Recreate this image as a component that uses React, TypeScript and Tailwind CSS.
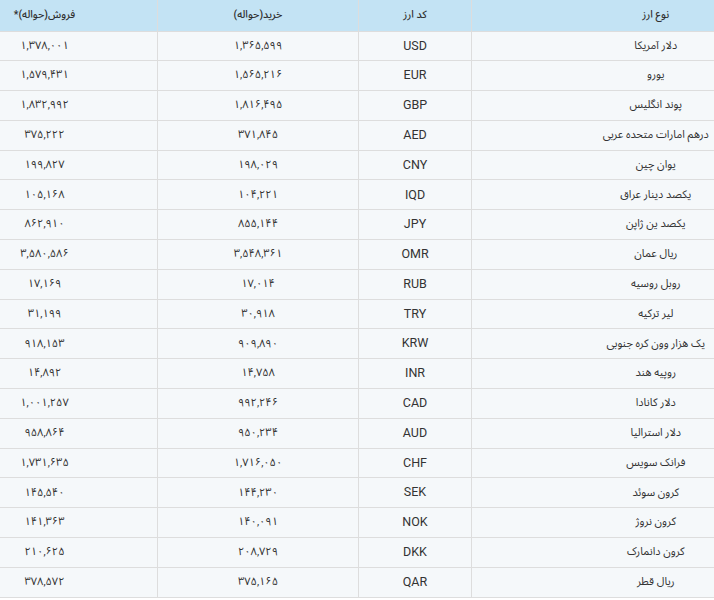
import React from "react";

type Rate = { name: string; code: string; buy: string; sell: string };

const rates: Rate[] = [
  { name: "دلار آمریکا", code: "USD", buy: "1,365,599", sell: "1,378,001" },
  { name: "یورو", code: "EUR", buy: "1,565,216", sell: "1,579,431" },
  { name: "پوند انگلیس", code: "GBP", buy: "1,816,495", sell: "1,832,992" },
  { name: "درهم امارات متحده عربی", code: "AED", buy: "371,845", sell: "375,222" },
  { name: "یوان چین", code: "CNY", buy: "198,029", sell: "199,827" },
  { name: "یکصد دینار عراق", code: "IQD", buy: "104,221", sell: "105,168" },
  { name: "یکصد ین ژاپن", code: "JPY", buy: "855,144", sell: "862,910" },
  { name: "ریال عمان", code: "OMR", buy: "3,548,361", sell: "3,580,586" },
  { name: "روبل روسیه", code: "RUB", buy: "17,014", sell: "17,169" },
  { name: "لیر ترکیه", code: "TRY", buy: "30,918", sell: "31,199" },
  { name: "یک هزار وون کره جنوبی", code: "KRW", buy: "909,890", sell: "918,153" },
  { name: "روپیه هند", code: "INR", buy: "14,758", sell: "14,892" },
  { name: "دلار کانادا", code: "CAD", buy: "992,246", sell: "1,001,257" },
  { name: "دلار استرالیا", code: "AUD", buy: "950,234", sell: "958,864" },
  { name: "فرانک سویس", code: "CHF", buy: "1,716,050", sell: "1,731,635" },
  { name: "کرون سوئد", code: "SEK", buy: "144,230", sell: "145,540" },
  { name: "کرون نروژ", code: "NOK", buy: "140,091", sell: "141,363" },
  { name: "کرون دانمارک", code: "DKK", buy: "208,729", sell: "210,625" },
  { name: "ریال قطر", code: "QAR", buy: "375,165", sell: "378,572" },
];

const faDigits = (s: string) => s.replace(/[0-9]/g, (d) => "۰۱۲۳۴۵۶۷۸۹"[Number(d)]);

const cell = "border-l border-b border-[#dddddd] text-center align-middle";
const head = `${cell} font-medium text-[10.5px] text-[#2f2f2f]`;

export default function App() {
  return (
    <div className="w-[714px] h-[600px] overflow-hidden bg-white font-['Roboto','Noto_Sans_Arabic','DejaVu_Sans',sans-serif] text-[#333333]">
      <table dir="rtl" className="table-fixed border-collapse w-[908px] ml-[-69px] text-[11px]">
        <colgroup>
          <col className="w-[368px]" />
          <col className="w-[113px]" />
          <col className="w-[201px]" />
          <col className="w-[226px]" />
        </colgroup>
        <thead>
          <tr className="bg-[#c3e3f4] h-[31px]">
            <th className={head}>نوع ارز</th>
            <th className={head}>کد ارز</th>
            <th className={head}>خرید(حواله)</th>
            <th className={head}>فروش(حواله)*</th>
          </tr>
        </thead>
        <tbody>
          {rates.map((r) => (
            <tr key={r.code} className="bg-[#f5f8fa] h-[29.8px]">
              <td className={cell}>{r.name}</td>
              <td className={`${cell} text-[12.5px]`}>{r.code}</td>
              <td className={cell}>{faDigits(r.buy)}</td>
              <td className={cell}>{faDigits(r.sell)}</td>
            </tr>
          ))}
        </tbody>
      </table>
    </div>
  );
}
